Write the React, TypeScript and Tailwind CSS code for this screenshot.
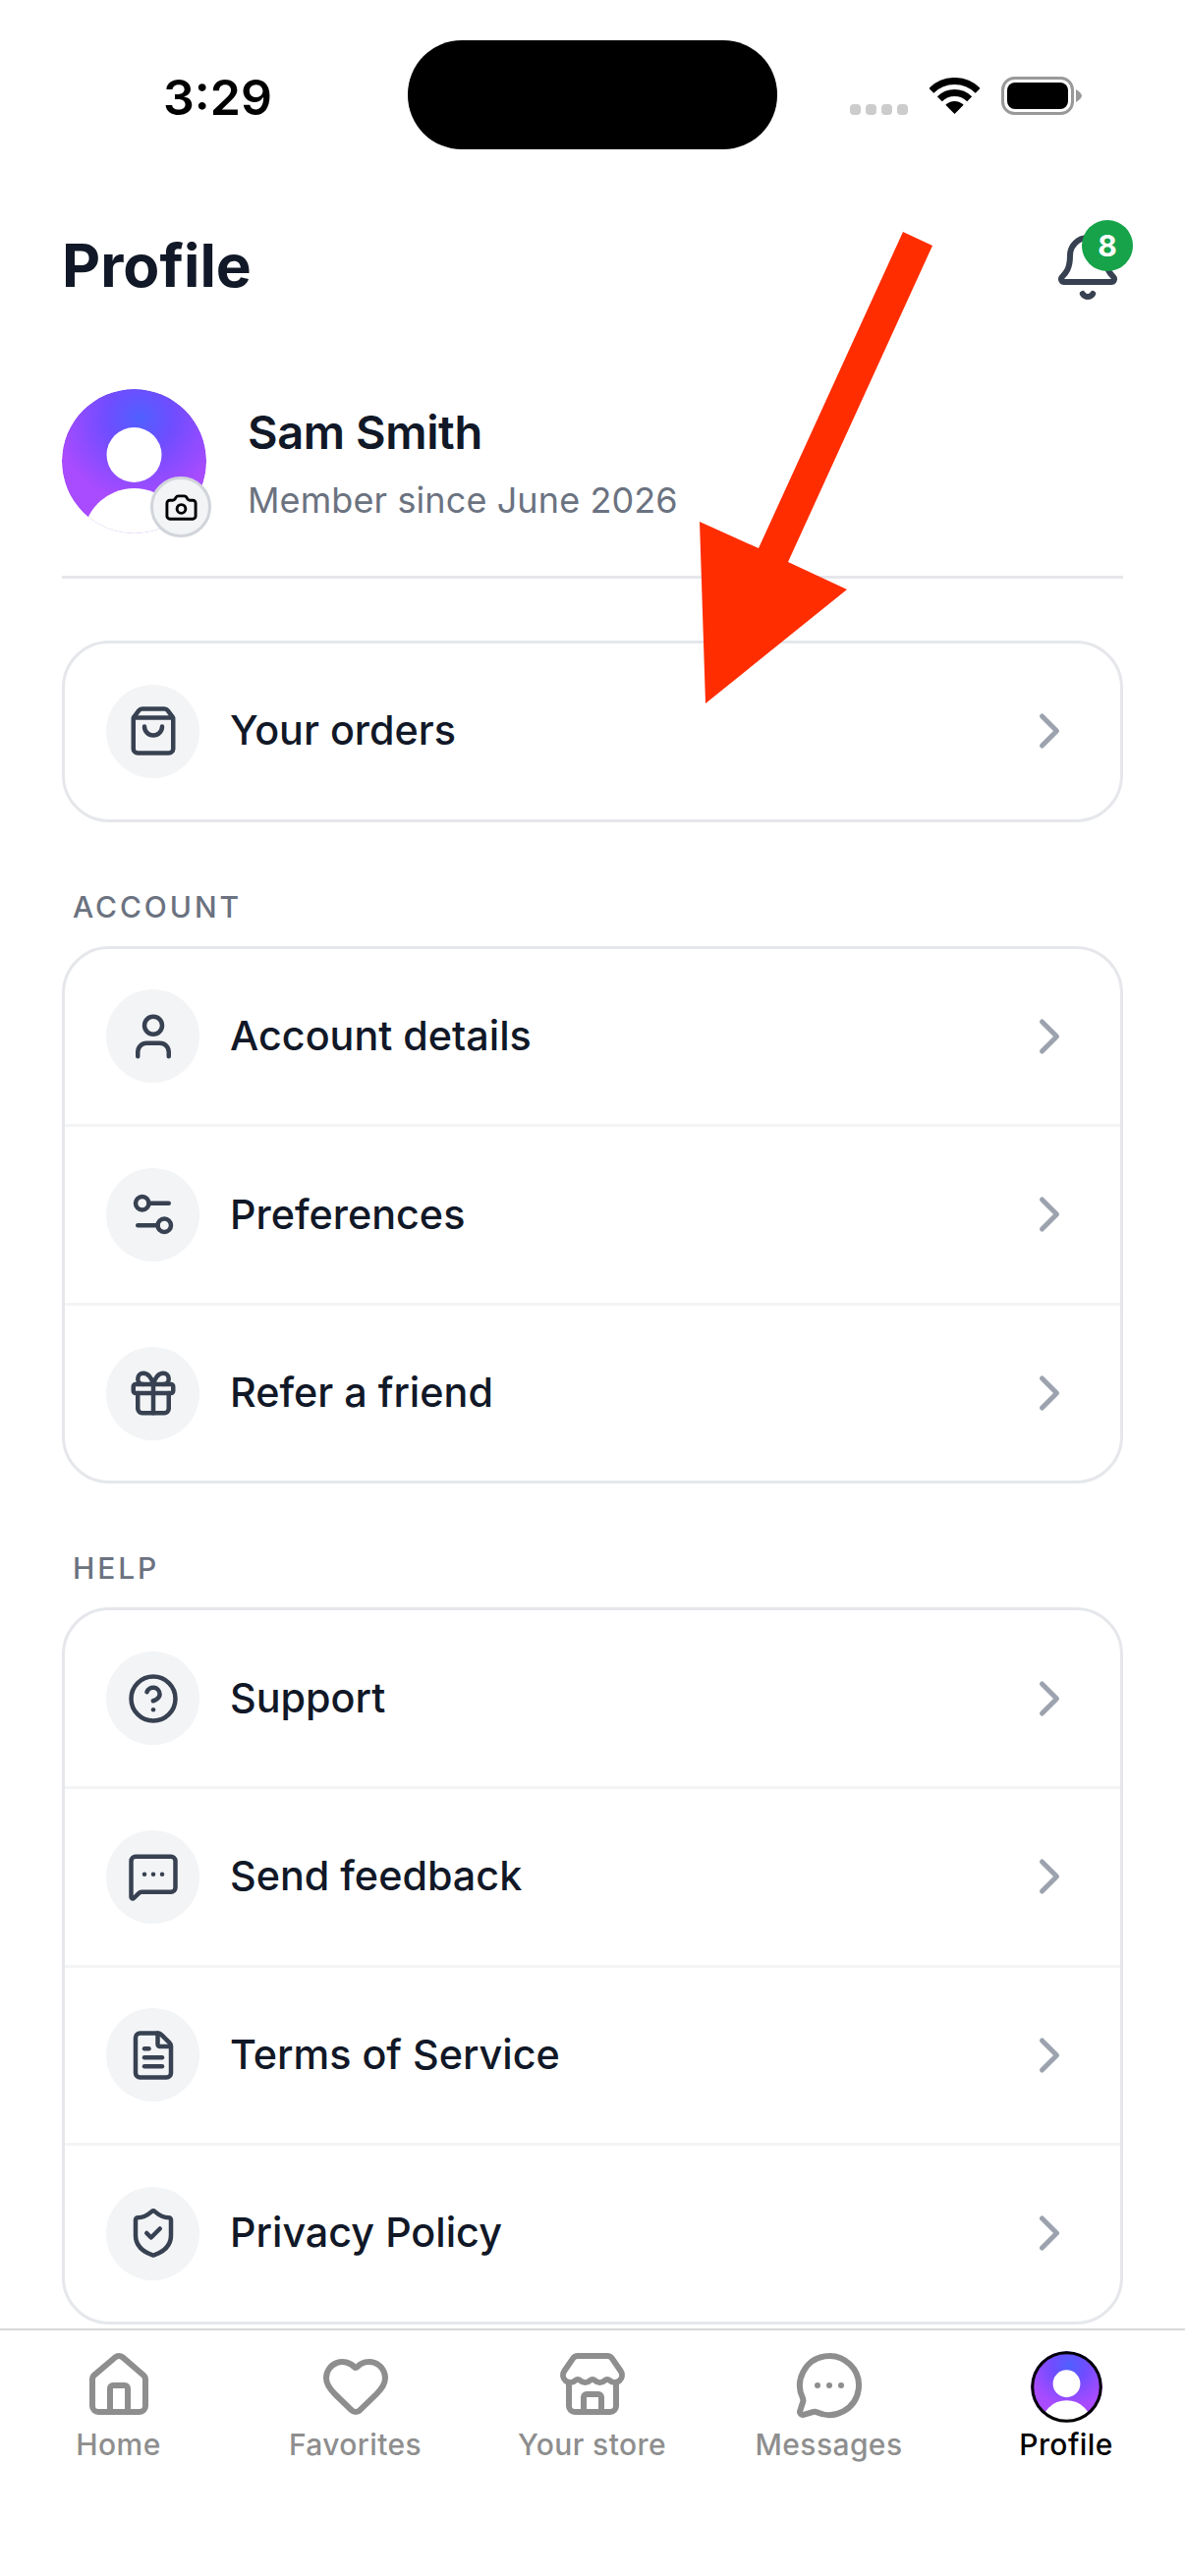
import React from 'react';
import {
  Bell,
  Camera,
  ChevronRight,
  CircleHelp,
  FileText,
  Gift,
  Heart,
  House,
  MessageCircleMore,
  MessageSquareMore,
  Settings2,
  ShieldCheck,
  ShoppingBag,
  Store,
  User,
  type LucideIcon,
} from 'lucide-react';

const accountRows: { label: string; icon: LucideIcon }[] = [
  { label: 'Account details', icon: User },
  { label: 'Preferences', icon: Settings2 },
  { label: 'Refer a friend', icon: Gift },
];

const helpRows: { label: string; icon: LucideIcon }[] = [
  { label: 'Support', icon: CircleHelp },
  { label: 'Send feedback', icon: MessageSquareMore },
  { label: 'Terms of Service', icon: FileText },
  { label: 'Privacy Policy', icon: ShieldCheck },
];

const tabs: { label: string; icon: LucideIcon }[] = [
  { label: 'Home', icon: House },
  { label: 'Favorites', icon: Heart },
  { label: 'Your store', icon: Store },
  { label: 'Messages', icon: MessageCircleMore },
];

const StatusBar = () => (
  <div className="flex h-[190px] items-start pl-[166px] pt-[41px]">
    <span className="mt-[28px] w-[249px] text-[50px] leading-[60px] font-semibold text-black">3:29</span>
    <div className="h-[111px] w-[376px] rounded-[55px] bg-black" />
    <div className="ml-[74px] mt-[37px] flex items-end">
      <div className="flex gap-[5px]">
        <div className="h-[11px] w-[11px] rounded-[4px] bg-[#cccccc]" />
        <div className="h-[11px] w-[11px] rounded-[4px] bg-[#cccccc]" />
        <div className="h-[11px] w-[11px] rounded-[4px] bg-[#cccccc]" />
        <div className="h-[11px] w-[11px] rounded-[4px] bg-[#cccccc]" />
      </div>
      <svg className="mb-[1px] ml-[22px]" width="51" height="37" viewBox="0 0 51 37">
        <path d="M25.5 37 L16.3 27.8 A13 13 0 0 1 34.7 27.8 Z" fill="#000" />
        <path d="M10.3 21.8 A21.5 21.5 0 0 1 40.7 21.8" fill="none" stroke="#000" strokeWidth="7" />
        <path d="M1.8 13.3 A33.5 33.5 0 0 1 49.2 13.3" fill="none" stroke="#000" strokeWidth="7" />
      </svg>
      <svg className="ml-[22px]" width="82" height="39" viewBox="0 0 82 39">
        <rect x="1.5" y="1.5" width="71" height="36" rx="12" fill="none" stroke="#999999" strokeWidth="3" />
        <rect x="6" y="6" width="62" height="27" rx="8" fill="#000" />
        <path d="M76 13 C80 15 82 18 82 19.5 C82 21 80 24 76 26 Z" fill="#999999" />
      </svg>
    </div>
  </div>
);

const Avatar = ({ small }: { small?: boolean }) => (
  <svg className="block" width={small ? 73 : 147} height={small ? 75 : 147} viewBox="0 0 147 147">
    <defs>
      <radialGradient id={small ? 'avatar-small' : 'avatar-big'} cx="0.54" cy="0.2" r="0.58">
        <stop offset="0" stopColor="#4f60ff" />
        <stop offset="0.4" stopColor="#6f4dff" />
        <stop offset="1" stopColor="#a94bff" />
      </radialGradient>
      <clipPath id={small ? 'avatar-clip-small' : 'avatar-clip-big'}>
        <circle cx="73.5" cy="73.5" r="73.5" />
      </clipPath>
    </defs>
    <g clipPath={small ? 'url(#avatar-clip-small)' : 'url(#avatar-clip-big)'}>
      <circle cx="73.5" cy="73.5" r="73.5" fill={small ? 'url(#avatar-small)' : 'url(#avatar-big)'} />
      <circle cx="73.5" cy="67" r="28" fill="#fff" />
      <circle cx="73.5" cy="153" r="52" fill="#fff" />
    </g>
    {small ? (
      <circle cx="73.5" cy="73.5" r="70" fill="none" stroke="#000" strokeWidth="6" />
    ) : (
      <circle cx="73.5" cy="73.5" r="73" fill="none" stroke="#000" strokeOpacity="0.04" strokeWidth="1" />
    )}
  </svg>
);

const Row = ({ label, icon: Icon, divider }: { label: string; icon: LucideIcon; divider?: boolean }) => (
  <div className={`flex h-[178.6px] items-center px-[42px] ${divider ? 'box-content border-t-[3px] border-[#f3f4f6]' : ''}`}>
    <div className="flex h-[95px] w-[95px] items-center justify-center rounded-full bg-[#f3f4f6]">
      <Icon size={54} strokeWidth={2} color="#374151" />
    </div>
    <span className="ml-[31px] flex-1 text-[41.3px] font-medium text-[#111827]">{label}</span>
    <ChevronRight size={60} strokeWidth={2} color="#9ca3af" />
  </div>
);

const Card = ({ rows }: { rows: { label: string; icon: LucideIcon }[] }) => (
  <div className="rounded-[48px] border-[3px] border-[#e5e7eb] bg-white">
    {rows.map((row, i) => (
      <Row key={row.label} label={row.label} icon={row.icon} divider={i > 0} />
    ))}
  </div>
);

const SectionTitle = ({ children }: { children: string }) => (
  <div className="mb-[20px] mt-[66px] pl-[11px] text-[30px] leading-[40px] font-medium tracking-[2.9px] text-[#6b7280]">
    {children}
  </div>
);

export default function App() {
  return (
    <div className="relative flex h-[2622px] w-[1206px] flex-col overflow-hidden bg-white font-['Inter',sans-serif]">
      <div className="h-[2370px] overflow-hidden">
        <StatusBar />
        <div className="flex h-[206px] items-start justify-between pl-[63px] pr-[51px]">
          <h1 className="mt-[35px] text-[60.5px] leading-[90px] font-bold text-[#111827]">Profile</h1>
          <div className="relative mt-[46px] h-[72px] w-[84px]">
            <Bell size={72} strokeWidth={2} color="#374151" />
            <div className="absolute left-[30px] top-[-12px] flex h-[52px] w-[52px] items-center justify-center rounded-full bg-[#16a34a] text-[30px] font-bold text-white">
              8
            </div>
          </div>
        </div>
        <div className="px-[63px]">
          <div className="flex h-[193px] items-start border-b-[3px] border-[#e5e7eb]">
            <div className="relative h-[147px] w-[147px]">
              <Avatar />
              <div className="absolute left-[90px] top-[89px] flex h-[62px] w-[62px] items-center justify-center rounded-full border-[3px] border-[#d1d5db] bg-[#f3f4f6]">
                <Camera size={35} strokeWidth={2} color="#000" />
              </div>
            </div>
            <div className="ml-[42px] pt-[15px]">
              <div className="text-[47px] leading-[58px] font-semibold tracking-[-0.4px] text-[#111827]">Sam Smith</div>
              <div className="mt-[18px] text-[36px] leading-[44px] tracking-[0.1px] text-[#6b7280]">Member since June 2026</div>
            </div>
          </div>
          <div className="mt-[63px]">
            <Card rows={[{ label: 'Your orders', icon: ShoppingBag }]} />
          </div>
          <SectionTitle>ACCOUNT</SectionTitle>
          <Card rows={accountRows} />
          <SectionTitle>HELP</SectionTitle>
          <Card rows={helpRows} />
        </div>
      </div>
      <div className="flex flex-1 items-start border-t-[2px] border-[#d9d9db] bg-white pt-[20px]">
        {tabs.map(tab => (
          <div key={tab.label} className="flex w-[241px] flex-col items-center">
            <tab.icon size={72} strokeWidth={2} color="#8e8e8e" />
            <span className="mt-[6px] text-[30px] leading-[36px] font-medium tracking-[0.4px] text-[#8e8e8e]">{tab.label}</span>
          </div>
        ))}
        <div className="flex w-[242px] flex-col items-center">
          <Avatar small />
          <span className="mt-[3px] text-[30px] leading-[36px] font-medium tracking-[0.4px] text-black">Profile</span>
        </div>
      </div>
      <svg className="absolute left-0 top-0 pointer-events-none" width="1206" height="800" viewBox="0 0 1206 800">
        <polygon points="919,236 949,250 802,572 862,600 718,716 712,531 772,558" fill="#ff2d00" />
      </svg>
    </div>
  );
}
